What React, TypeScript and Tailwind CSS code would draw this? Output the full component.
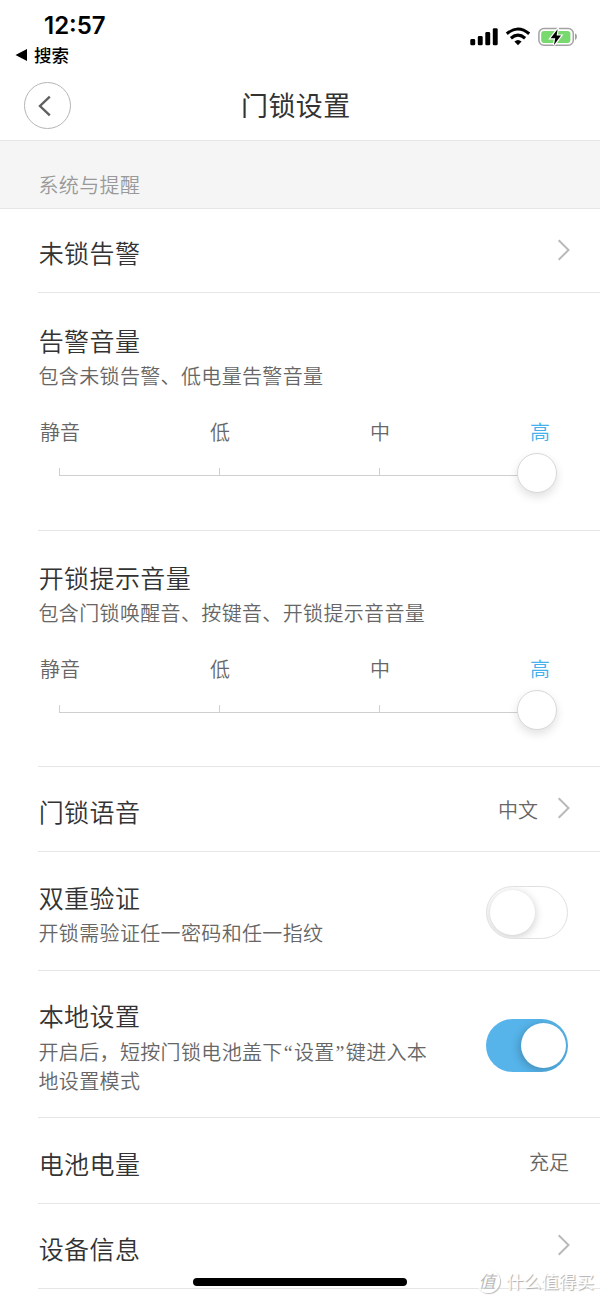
import type { ReactNode } from "react";

function Chevron({ className = "" }: { className?: string }) {
  return (
    <svg className={className} width="14" height="22" viewBox="0 0 14 22" fill="none" stroke="#b9b9b9" strokeWidth="2">
      <path d="M1.7 1.2 L11.5 11 L1.7 20.8" />
    </svg>
  );
}

function Row({ className, children }: { className: string; children: ReactNode }) {
  return <section className={`ml-[38px] border-b border-[#e6e6e6] pr-8 ${className}`}>{children}</section>;
}

function Title({ children }: { children: ReactNode }) {
  return <h2 className="pl-[0.7px] text-[25px] leading-[34px] font-[350] tracking-[0.4px] text-[#333]">{children}</h2>;
}

function Sub({ children }: { children: ReactNode }) {
  return <p className="mt-1 pl-[0.5px] text-[20px] leading-[29px] font-[350] tracking-[0.35px] text-[#666]">{children}</p>;
}

const levels = ["静音", "低", "中", "高"];

function Volume() {
  return (
    <div className="mt-7 ml-0.5 w-[520px]">
      <div className="flex justify-between text-[20px] leading-7 font-[350] text-[#666]">
        {levels.map((level) => (
          <span key={level} className={`w-10 text-center ${level === "高" ? "text-[#45b0ec]" : ""}`}>
            {level}
          </span>
        ))}
      </div>
      <div className="relative mt-[22px] ml-[19px] h-2 w-[480px] border-b border-[#cfcfcf]">
        <div className="flex h-full">
          <i className="w-40 border-l border-[#cfcfcf]" />
          <i className="w-40 border-l border-[#cfcfcf]" />
          <i className="w-40 border-l border-[#cfcfcf]" />
        </div>
        <div className="absolute -top-[15px] left-[457.5px] size-10 rounded-full border-[1.5px] border-[#d8d8d8] bg-white shadow-[0_4px_10px_rgba(0,0,0,0.12)]" />
      </div>
    </div>
  );
}

function Switch({ on = false }: { on?: boolean }) {
  return on ? (
    <div className="flex h-[53px] w-[82px] shrink-0 items-center justify-end overflow-hidden rounded-full bg-[#56b4ea] pr-0.5">
      <div className="size-[45px] rounded-full bg-white shadow-[-2px_2px_8px_rgba(0,0,0,0.22)]" />
    </div>
  ) : (
    <div className="flex h-[53px] w-[82px] shrink-0 items-center overflow-hidden rounded-full border border-[#e0e0e0] bg-white pl-[3px]">
      <div className="size-[45px] rounded-full bg-white shadow-[0_2px_10px_rgba(0,0,0,0.22)]" />
    </div>
  );
}

function Quote({ children }: { children: string }) {
  return <span className="inline-block w-[11.2px] text-center font-['Liberation_Serif',serif] leading-none">{children}</span>;
}

function StatusIcons() {
  return (
    <svg width="108" height="22" viewBox="0 0 108 22">
      <rect x="0.3" y="13" width="4.9" height="6.3" rx="1.4" />
      <rect x="7.8" y="10" width="4.9" height="9.3" rx="1.4" />
      <rect x="15.3" y="6" width="4.9" height="13.3" rx="1.4" />
      <rect x="22.8" y="2.2" width="4.9" height="17.1" rx="1.4" />
      <g fill="none" stroke="#000" strokeWidth="3.1">
        <path d="M36.8 7.8 Q48 -1.8 59.2 7.8" />
        <path d="M40.9 12.2 Q48 6.2 55.1 12.2" />
      </g>
      <path d="M44.4 15.6 Q48 12.6 51.6 15.6 L48 19.3 Z" />
      <rect x="68.9" y="2.5" width="34.4" height="16.8" rx="5" fill="none" stroke="#a3a3a3" strokeWidth="1.5" />
      <rect x="71.2" y="4.9" width="29.2" height="12" rx="2.8" fill="#78d96f" />
      <path d="M105 7.3 Q107 8.2 107 10.6 Q107 13 105 14 Z" fill="#a3a3a3" />
      <path d="M87.6 3.2 L80.6 12.2 H85.2 L84 19 L91 9.6 H86.6 Z" stroke="#fff" strokeWidth="2.4" paintOrder="stroke" />
    </svg>
  );
}

export default function App() {
  return (
    <main className="relative h-[1299px] w-[600px] overflow-hidden bg-white font-['Noto_Sans_CJK_SC',sans-serif]">
      <header className="flex h-[141px] flex-col border-b border-[#e5e5e5]">
        <div className="flex h-[76px] justify-between pt-[11px] pr-[22px] pl-[15px]">
          <div>
            <div className="pl-[29px] font-['Inter',sans-serif] text-[24px] leading-[30px] font-semibold text-black">12:57</div>
            <div className="flex h-7 items-center gap-[7px] text-[17.5px] leading-7 font-medium text-black">
              <svg width="12" height="12" viewBox="0 0 12 12">
                <path d="M0.5 6 L12 0 V12 Z" />
              </svg>
              搜索
            </div>
          </div>
          <div className="pt-[15px]">
            <StatusIcons />
          </div>
        </div>
        <div className="flex h-[59px] items-center pl-6">
          <button className="flex size-[47px] items-center justify-center rounded-full border border-[#b5b5b5]">
            <svg className="-ml-[5px]" width="14" height="22" viewBox="0 0 14 22" fill="none" stroke="#606060" strokeWidth="2.4">
              <path d="M11.8 1.6 L2 11 L11.8 20.4" />
            </svg>
          </button>
          <h1 className="-mt-px ml-[170px] text-[27px] leading-10 font-normal tracking-[0.4px] text-[#333]">门锁设置</h1>
        </div>
      </header>

      <div className="h-[68px] border-b border-[#e5e5e5] bg-[#f5f5f5] pt-[30px] pl-[38.5px] text-[20px] leading-[28px] font-[350] tracking-[0.35px] text-[#999]">
        系统与提醒
      </div>

      <Row className="flex h-[84px] items-center justify-between">
        <div className="pt-[3px]">
          <Title>未锁告警</Title>
        </div>
        <Chevron className="-mt-0.5 -mr-[3px]" />
      </Row>

      <Row className="h-[238px] border-[#d4d4d4] pt-[30px]">
        <Title>告警音量</Title>
        <Sub>包含未锁告警、低电量告警音量</Sub>
        <Volume />
      </Row>

      <Row className="h-[236px] pt-[29px]">
        <Title>开锁提示音量</Title>
        <Sub>包含门锁唤醒音、按键音、开锁提示音音量</Sub>
        <Volume />
      </Row>

      <Row className="flex h-[85px] items-center justify-between">
        <div className="pt-1">
          <Title>门锁语音</Title>
        </div>
        <div className="flex items-center">
          <span className="mr-[19px] pt-px text-[20px] leading-7 font-[350] text-[#666]">中文</span>
          <Chevron className="-mt-0.5 -mr-[3px]" />
        </div>
      </Row>

      <Row className="flex h-[119px] justify-between pt-7">
        <div>
          <Title>双重验证</Title>
          <Sub>开锁需验证任一密码和任一指纹</Sub>
        </div>
        <div className="pt-1.5">
          <Switch />
        </div>
      </Row>

      <Row className="flex h-[147px] justify-between pt-[27px]">
        <div className="w-[400px]">
          <Title>本地设置</Title>
          <div className="pt-px">
            <Sub>
              开启后，短按门锁电池盖下<Quote>“</Quote>设置<Quote>”</Quote>键进入本
              <br />
              地设置模式
            </Sub>
          </div>
        </div>
        <div className="pt-[21px]">
          <Switch on />
        </div>
      </Row>

      <Row className="flex h-[86px] items-center justify-between">
        <div className="pt-1">
          <Title>电池电量</Title>
        </div>
        <span className="-mr-px pt-0.5 text-[20px] leading-7 font-[350] text-[#666]">充足</span>
      </Row>

      <Row className="flex h-[85px] items-center justify-between">
        <div className="pt-[3px]">
          <Title>设备信息</Title>
        </div>
        <Chevron className="-mt-0.5 -mr-[3px]" />
      </Row>

      <div className="absolute top-[1278px] left-[193px] h-2 w-[214px] rounded-full bg-black" />
      <div className="absolute top-[1269px] left-[476px] flex items-center gap-1.5 text-white [text-shadow:1px_1px_1px_#aaa]">
        <span className="flex size-6 items-center justify-center rounded-full bg-white/80 pr-0.5 text-[17px] leading-6 text-[#bbb] italic shadow-[1px_1px_1px_#bbb] [text-shadow:none]">值</span>
        <span className="text-[17.6px] leading-6">什么值得买</span>
      </div>
    </main>
  );
}
